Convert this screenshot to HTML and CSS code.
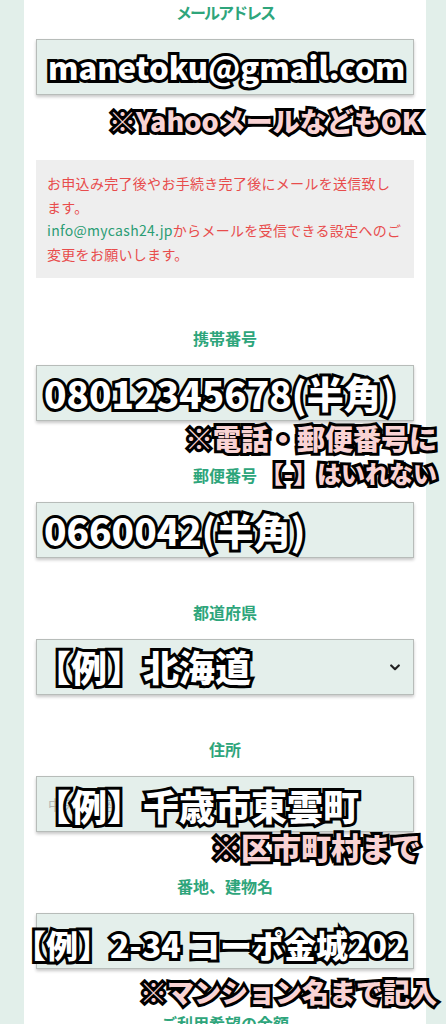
FILE: index.html
```html
<!DOCTYPE html>
<html lang="ja">
<head>
<meta charset="utf-8">
<title>お申込みフォーム</title>
<link rel="stylesheet" href="styles.css">
</head>
<body>
<div class="page">
  <main class="card">
    <section class="field field-email">
      <div class="label label-kana">メールアドレス</div>
      <div class="box"></div>
      <div class="info">
        <p>お申込み完了後やお手続き完了後にメールを送信致します。</p>
        <p><span class="link">info@mycash24.jp</span>からメールを受信できる設定へのご変更をお願いします。</p>
      </div>
      <p class="note white ov-email">manetoku@gmail.com</p>
      <p class="note pink ov-yahoo">※YahooメールなどもOK</p>
    </section>

    <section class="field">
      <div class="label">携帯番号</div>
      <div class="box"></div>
      <p class="note white ov-phone">08012345678(半角)</p>
      <p class="note pink ov-hyphen1">※電話・郵便番号に</p>
      <p class="note pink ov-hyphen2">【-】はいれない</p>
    </section>

    <section class="field">
      <div class="label">郵便番号</div>
      <div class="box"></div>
      <p class="note white ov-zip">0660042(半角)</p>
    </section>

    <section class="field">
      <div class="label">都道府県</div>
      <div class="box select">
        <svg class="chevron" width="10" height="7" viewBox="0 0 10 7"><path d="M1.2 1.5 L5 5.2 L8.8 1.5" fill="none" stroke="#222" stroke-width="2.2" stroke-linecap="round" stroke-linejoin="round"/></svg>
      </div>
      <p class="note white ov-pref">【例】北海道</p>
    </section>

    <section class="field">
      <div class="label">住所</div>
      <div class="box"><span class="placeholder">中央区銀座</span></div>
      <p class="note white ov-addr">【例】千歳市東雲町</p>
      <p class="note pink ov-city">※区市町村まで</p>
    </section>

    <section class="field">
      <div class="label">番地、建物名</div>
      <div class="box"></div>
      <p class="note white ov-street">【例】2-34 コーポ金城202</p>
      <p class="note pink ov-mansion">※マンション名まで記入</p>
    </section>

    <section class="field">
      <div class="label">ご利用希望の金額</div>
      <div class="box"></div>
    </section>
  </main>
</div>
</body>
</html>
```

FILE: styles.css
```css
* { box-sizing: border-box; }

html, body {
  margin: 0;
  padding: 0;
}

body {
  background: #e2efea;
  font-family: "Noto Sans CJK JP", "Noto Sans", sans-serif;
  overflow: hidden;
}

.page {
  width: 446px;
  height: 1024px;
  overflow: hidden;
}

.card {
  margin-left: 24px;
  width: 402px;
  min-height: 1200px;
  background: #ffffff;
  padding-top: 2px;
}

.field {
  position: relative;
  padding-bottom: 44px;
}

.field-email {
  padding-bottom: 50px;
}

.label {
  height: 20px;
  line-height: 20px;
  margin-bottom: 17px;
  text-align: center;
  color: #2ea57b;
  font-size: 16px;
  font-weight: 700;
}

.label-kana {
  letter-spacing: -2px;
}

.box {
  position: relative;
  height: 56px;
  margin: 0 12px;
  background: #e4efeb;
  border: 1px solid #b7bcb9;
  box-shadow: 0 2px 3px rgba(0, 0, 0, 0.22);
  display: flex;
  align-items: center;
  padding: 0 11px;
}

.select {
  justify-content: flex-end;
  padding-right: 13px;
}

.chevron {
  display: block;
}

.placeholder {
  color: #b3b6b4;
  font-size: 14px;
}

.info {
  margin: 65px 12px 0;
  background: #eeeeee;
  padding: 12px 11px;
  color: #e84c4c;
  font-size: 14px;
  letter-spacing: 0.3px;
  line-height: 23.5px;
}

.info p {
  margin: 0;
}

.link {
  color: #2a9d74;
}

.note {
  position: absolute;
  margin: 0;
  white-space: nowrap;
  line-height: 1;
  font-weight: 900;
  -webkit-text-stroke: 6px #000;
  paint-order: stroke fill;
  z-index: 5;
}

.white { color: #ffffff; }
.pink { color: #f9d3d4; }

.ov-email { left: 24px; top: 49px; font-size: 31px; }
.ov-yahoo { right: 5px; top: 105px; font-size: 27px; }

.ov-phone { left: 20px; top: 47px; font-size: 37px; }
.ov-hyphen1 { right: -11px; top: 96px; font-size: 28px; }
.ov-hyphen2 { right: -11px; top: 133px; font-size: 24px; }

.ov-zip { left: 20px; top: 47px; font-size: 37px; }

.ov-pref { left: 11px; top: 46px; font-size: 36px; }

.ov-addr { left: 11px; top: 48px; font-size: 36px; }
.ov-city { right: 5px; top: 92px; font-size: 30px; }

.ov-street { left: -10px; top: 52px; font-size: 32px; }
.ov-mansion { right: -11px; top: 102px; font-size: 27px; }
```
